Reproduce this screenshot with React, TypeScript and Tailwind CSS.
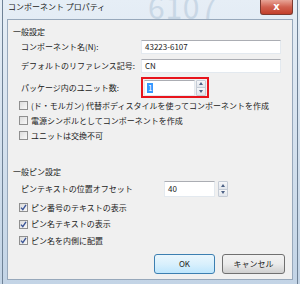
import React from "react";

const font = "font-['Noto_Sans_CJK_JP','Noto_Sans',sans-serif]";

function Spinner() {
  return (
    <div className="flex flex-col w-[10px] h-[16px] border border-[#c5ccd6] rounded-[1px] overflow-hidden">
      <div className="flex-1 flex items-center justify-center bg-gradient-to-b from-[#f6f7f9] to-[#e2e6ec] border-b border-[#c5ccd6]">
        <div className="w-0 h-0 border-l-[2.5px] border-r-[2.5px] border-b-[3px] border-l-transparent border-r-transparent border-b-[#4d6185]" />
      </div>
      <div className="flex-1 flex items-center justify-center bg-gradient-to-b from-[#f6f7f9] to-[#e2e6ec]">
        <div className="w-0 h-0 border-l-[2.5px] border-r-[2.5px] border-t-[3px] border-l-transparent border-r-transparent border-t-[#4d6185]" />
      </div>
    </div>
  );
}

function Check({ checked, label, className }: { checked?: boolean; label: string; className: string }) {
  return (
    <div className={`flex items-center h-[15px] pl-[11px] ${className}`}>
      <div className="w-[9px] h-[9px] border border-[#8f8f8f] bg-gradient-to-br from-[#dcdcdc] to-[#f8f8f8] flex items-center justify-center">
        {checked && (
          <svg width="7" height="7" viewBox="0 0 7 7">
            <path d="M1 3.6 L2.8 5.6 L6 0.8" fill="none" stroke="#3b5597" strokeWidth="1.4" />
          </svg>
        )}
      </div>
      <span className="ml-[3px] text-[8px] leading-none text-[#1b1b1b]">{label}</span>
    </div>
  );
}

function Field({ label, value, className }: { label: string; value: string; className: string }) {
  return (
    <div className={`flex items-center h-[14px] ${className}`}>
      <span className="pl-[13px] w-[133px] text-[8px] leading-none text-[#1b1b1b]">{label}</span>
      <div className="w-[140px] h-[14px] bg-white border border-[#e3e9ef] border-t-[#abadb3] flex items-center pl-[3px] text-[8px] leading-none text-[#1b1b1b]">
        {value}
      </div>
    </div>
  );
}

export default function App() {
  return (
    <div className={`relative w-[300px] h-[284px] overflow-hidden bg-gradient-to-b from-[#e6eef6] to-[#c3d4e6] ${font}`}>
      <div className="absolute left-[148px] top-[-9px] text-[30px] leading-none text-[#b7cadc] opacity-60 tracking-wide">6107</div>
      <div className="absolute left-[2px] top-0 bottom-0 w-px bg-[#6f8296]" />
      <div className="absolute right-[2px] top-0 bottom-0 w-px bg-[#6f8296]" />

      <div className="relative flex items-start h-[19px] pl-[8px] pr-[7px]">
        <span className="mt-[3px] text-[8px] leading-none text-[#1b1b1b]">コンポーネント プロパティ</span>
        <div className="ml-auto w-[33px] h-[15px] rounded-b-[3px] border border-t-0 border-[#7d3a30] bg-gradient-to-b from-[#e7a497] via-[#d0604f] to-[#c23f2b] flex items-center justify-center">
          <span className="text-white text-[10px] font-bold leading-none font-['DejaVu_Sans',sans-serif]">x</span>
        </div>
      </div>

      <div className="relative mx-[7px] h-[261px] bg-[#f0f0f0] border border-[#97a8bb] flex flex-col">
        <div className="mt-[7px] h-[10px] pl-[5px] text-[8px] leading-[10px] text-[#1b1b1b]">一般設定</div>
        <Field className="mt-[3px]" label="コンポーネント名(N):" value="43223-6107" />
        <Field className="mt-[5px]" label="デフォルトのリファレンス記号:" value="CN" />

        <div className="mt-[4px] flex items-center h-[21px]">
          <span className="pl-[13px] w-[133px] text-[8px] leading-none text-[#1b1b1b]">パッケージ内のユニット数:</span>
          <div className="w-[68px] h-[21px] border-2 border-[#e8141c] flex items-center pl-[1px] gap-[1px]">
            <div className="w-[51px] h-[16px] bg-white border border-[#e3e9ef] border-t-[#abadb3] flex items-center pl-[2px]">
              <span className="bg-[#3399ff] text-white text-[8px] leading-[10px] px-[1px]">1</span>
            </div>
            <Spinner />
          </div>
        </div>

        <Check className="mt-[0px]" label="(ド・モルガン) 代替ボディスタイルを使ってコンポーネントを作成" />
        <Check label="電源シンボルとしてコンポーネントを作成" />
        <Check label="ユニットは交換不可" />

        <div className="mt-[24px] h-[10px] pl-[5px] text-[8px] leading-[10px] text-[#1b1b1b]">一般ピン設定</div>

        <div className="mt-[4px] flex items-center h-[16px]">
          <span className="pl-[13px] w-[156px] text-[8px] leading-none text-[#1b1b1b]">ピンテキストの位置オフセット</span>
          <div className="w-[51px] h-[16px] bg-white border border-[#e3e9ef] border-t-[#abadb3] flex items-center pl-[3px] text-[8px] leading-none text-[#1b1b1b]">
            40
          </div>
          <div className="ml-[3px]">
            <Spinner />
          </div>
        </div>

        <div className="mt-[3px] flex flex-col gap-[1.5px]">
          <Check checked label="ピン番号のテキストの表示" />
          <Check checked label="ピン名テキストの表示" />
          <Check checked label="ピン名を内側に配置" />
        </div>

        <div className="mt-auto mb-[5px] flex justify-end gap-[7px] pr-[7px]">
          <button className="w-[61px] h-[20px] rounded-[3px] border border-[#3c7fb1] bg-gradient-to-b from-[#eaf6fd] via-[#d9f0fc] to-[#bee6fd] text-[8px] text-[#1b1b1b] leading-none">
            OK
          </button>
          <button className="w-[63px] h-[20px] rounded-[3px] border border-[#707070] bg-gradient-to-b from-[#f2f2f2] via-[#ebebeb] to-[#cfcfcf] text-[8px] text-[#1b1b1b] leading-none">
            キャンセル
          </button>
        </div>
      </div>
    </div>
  );
}
